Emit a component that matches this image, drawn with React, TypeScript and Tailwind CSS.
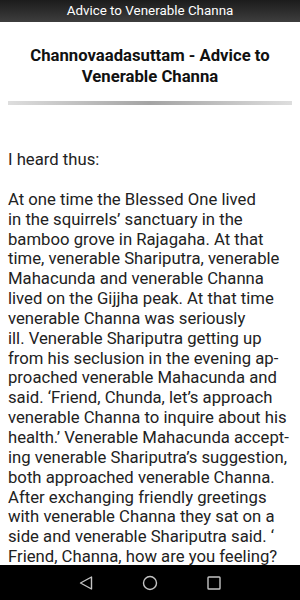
import React from 'react';

const lines = [
  'At one time the Blessed One lived',
  'in the squirrels\u2019 sanctuary in the',
  'bamboo grove in Rajagaha. At that',
  'time, venerable Shariputra, venerable',
  'Mahacunda and venerable Channa',
  'lived on the Gijjha peak. At that time',
  'venerable Channa was seriously',
  'ill. Venerable Shariputra getting up',
  'from his seclusion in the evening ap-',
  'proached venerable Mahacunda and',
  'said. \u2018Friend, Chunda, let\u2019s approach',
  'venerable Channa to inquire about his',
  'health.\u2019 Venerable Mahacunda accept-',
  'ing venerable Shariputra\u2019s suggestion,',
  'both approached venerable Channa.',
  'After exchanging friendly greetings',
  'with venerable Channa they sat on a',
  'side and venerable Shariputra said. \u2018',
  'Friend, Channa, how are you feeling?',
];

const App: React.FC = () => {
  return (
    <div
      className="w-[300px] h-[600px] flex flex-col bg-white overflow-hidden"
      style={{ fontFamily: 'Roboto, "Noto Sans", sans-serif' }}
    >
      {/* Title bar */}
      <div className="h-[22px] shrink-0 flex items-center justify-center bg-gradient-to-b from-[#1c1c1c] to-[#3e3e3e] text-white text-[13.4px] leading-none">
        Advice to Venerable Channa
      </div>

      {/* Content */}
      <div className="flex-1 overflow-hidden px-2">
        <h1 className="mt-[22.7px] text-center font-bold text-[16.7px] leading-[21.4px] text-[#111]">
          Channovaadasuttam - Advice to
          <br />
          Venerable Channa
        </h1>
        <div className="mt-[13.5px] h-[4px] bg-gradient-to-r from-[#dedede] via-[#a4a4a4] to-[#dedede]" />

        <div className="mt-[45px] text-[16.7px] leading-[19.85px] text-[#222] whitespace-nowrap">
          <p>I heard thus:</p>
          <p className="mt-[20px]">
            {lines.map((l, i) => (
              <span key={i} className="block">{l}</span>
            ))}
          </p>
        </div>
      </div>

      {/* Nav bar */}
      <div className="h-[35px] shrink-0 bg-black flex items-center justify-center">
        <div className="flex items-center gap-[48px] text-[#c4c4c4]">
          <svg width="16" height="16" viewBox="0 0 16 16">
            <path d="M13.5 2 L2.5 8 L13.5 14 Z" fill="none" stroke="currentColor" strokeWidth="1.4" strokeLinejoin="round" />
          </svg>
          <svg width="16" height="16" viewBox="0 0 16 16">
            <circle cx="8" cy="8" r="6.5" fill="none" stroke="currentColor" strokeWidth="1.4" />
          </svg>
          <svg width="16" height="16" viewBox="0 0 16 16">
            <rect x="2" y="2" width="12" height="12" rx="0.8" fill="none" stroke="currentColor" strokeWidth="1.4" />
          </svg>
        </div>
      </div>
    </div>
  );
};

export default App;
